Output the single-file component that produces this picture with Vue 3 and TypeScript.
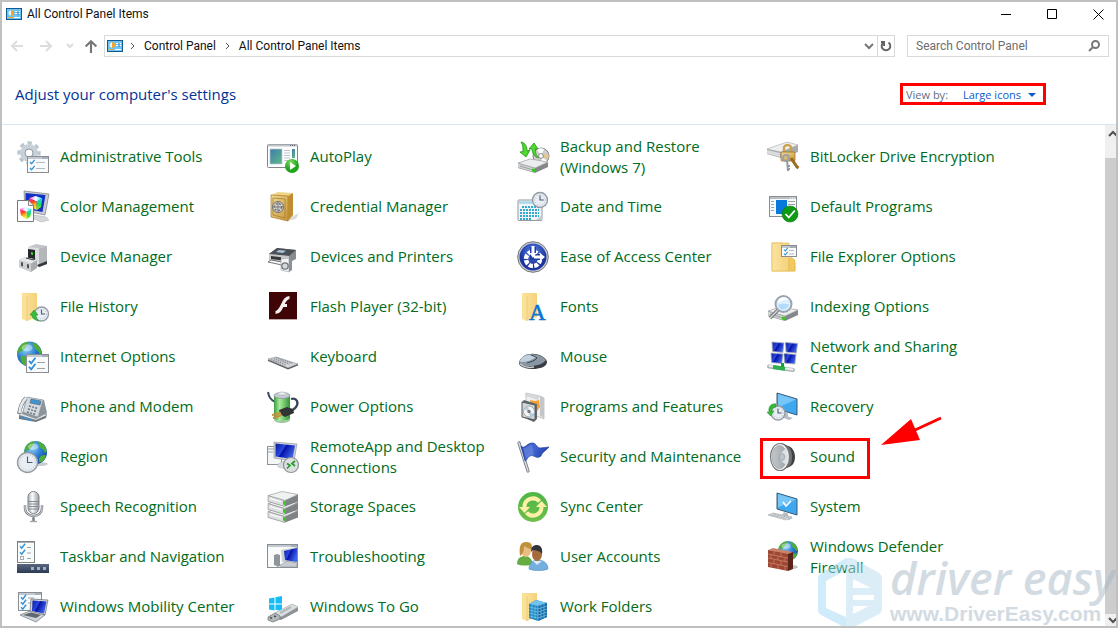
<script setup lang="ts">
import { ref } from 'vue'

interface PanelItem {
  icon: string
  label: string
  marked?: boolean
}

const view = ref('Large icons')
const query = ref('')

const items: PanelItem[] = [
  { icon: 'admin', label: 'Administrative Tools' },
  { icon: 'autoplay', label: 'AutoPlay' },
  { icon: 'backup', label: 'Backup and Restore (Windows 7)' },
  { icon: 'bitlocker', label: 'BitLocker Drive Encryption' },
  { icon: 'color', label: 'Color Management' },
  { icon: 'credential', label: 'Credential Manager' },
  { icon: 'date', label: 'Date and Time' },
  { icon: 'defaults', label: 'Default Programs' },
  { icon: 'device', label: 'Device Manager' },
  { icon: 'printers', label: 'Devices and Printers' },
  { icon: 'ease', label: 'Ease of Access Center' },
  { icon: 'explorer', label: 'File Explorer Options' },
  { icon: 'history', label: 'File History' },
  { icon: 'flash', label: 'Flash Player (32-bit)' },
  { icon: 'fonts', label: 'Fonts' },
  { icon: 'indexing', label: 'Indexing Options' },
  { icon: 'internet', label: 'Internet Options' },
  { icon: 'keyboard', label: 'Keyboard' },
  { icon: 'mouse', label: 'Mouse' },
  { icon: 'network', label: 'Network and Sharing Center' },
  { icon: 'phone', label: 'Phone and Modem' },
  { icon: 'power', label: 'Power Options' },
  { icon: 'programs', label: 'Programs and Features' },
  { icon: 'recovery', label: 'Recovery' },
  { icon: 'region', label: 'Region' },
  { icon: 'remote', label: 'RemoteApp and Desktop Connections' },
  { icon: 'security', label: 'Security and Maintenance' },
  { icon: 'sound', label: 'Sound', marked: true },
  { icon: 'speech', label: 'Speech Recognition' },
  { icon: 'storage', label: 'Storage Spaces' },
  { icon: 'sync', label: 'Sync Center' },
  { icon: 'system', label: 'System' },
  { icon: 'taskbar', label: 'Taskbar and Navigation' },
  { icon: 'trouble', label: 'Troubleshooting' },
  { icon: 'users', label: 'User Accounts' },
  { icon: 'firewall', label: 'Windows Defender Firewall' },
  { icon: 'mobility', label: 'Windows Mobility Center' },
  { icon: 'togo', label: 'Windows To Go' },
  { icon: 'work', label: 'Work Folders' },
]

const tick = (x: number, y: number, s = 1) =>
  `<path d="M${x} ${y + 2 * s}l${1.6 * s} ${1.8 * s}l${3 * s} ${-4 * s}" fill="none" stroke="#2f8fd8" stroke-width="${1.3 * s}"/>`
const clock = (x: number, y: number, r: number) =>
  `<circle cx="${x}" cy="${y}" r="${r}" fill="#e9eef4" stroke="#949ca4" stroke-width="1.4"/>` +
  `<circle cx="${x}" cy="${y}" r="${r - 2.2}" fill="none" stroke="#a9b3bd" stroke-width=".9" stroke-dasharray="1 1.6"/>` +
  `<path d="M${x} ${y - r * 0.6}V${y}H${x + r * 0.5}" fill="none" stroke="#4d5b70" stroke-width="1.1"/>`
const folder =
  '<path d="M5 2h15v24l-10 4-5-2z" fill="url(#gFold)"/><path d="M5 2l5 3v25l-5-3z" fill="#fbe09a"/><path d="M10 5v25" stroke="#e8c55f" stroke-width=".6"/>'
const globe = (x: number, y: number, r: number) =>
  `<g transform="translate(${x} ${y}) scale(${r / 10})"><circle r="10" fill="url(#gGlobe)"/>` +
  '<path d="M-9-4C-7-8-4-9.600-1-9.500c1 1 0 2-1 2.500s0 2-2 3-1 2-3 2-2 2-2.500 3C-10 0-9.700-2-9-4zM3-9.300C7-8 9.500-4 9.800-1 9 1 8 0 7-2S4-3 4-5 1-8 3-9.300zM-7 2c2-1 5 0 6 2s-1 3-1 5.500C-5 9-8 6-7 2zM5 3c2-1 4-1 4 0S7 8 4.500 8.500 3 4 5 3z" fill="#4fae35"/>' +
  '<ellipse cx="-2" cy="-5" rx="4.500" ry="2.800" fill="#fff" opacity=".4"/></g>'
const frame = (x: number, y: number, w: number, h: number) =>
  `<rect x="${x}" y="${y}" width="${w}" height="${h}" fill="#f9fafb" stroke="#898e95"/>` +
  `<path d="M${x + 0.5} ${y + 1.5}h${w - 1}" stroke="#c3c9d1" stroke-width="2"/>` +
  `<path d="M${x + w - 6} ${y + 1.5}h5" stroke="#5b6470" stroke-width="1" stroke-dasharray="1 1"/>`
const drive = (y: number) =>
  `<path d="M1 ${y + 4}L13 ${y}l18 3v5l-13 6L1 ${y + 9}z" fill="#85888b"/><path d="M1 ${y + 4}L13 ${y}l18 3-13 6z" fill="#eceded" stroke="#a3a5a7" stroke-width=".6"/>` +
  `<path d="M1 ${y + 4.500}l17 5v4L1 ${y + 8.500}z" fill="#d0d2d3"/><path d="M3 ${y + 7}l13 4" stroke="#8f9295" stroke-width=".8"/><path d="M15 ${y + 9.500}l3 .5v3.200l-3-.8z" fill="#37c51f"/>`
const slab = (y: number) =>
  `<path d="M1 ${y + 4}v6l17 5 13-5V${y + 3}z" fill="#7f8385"/><path d="M1 ${y + 4}l17 5v6l-17-5z" fill="#dcdee0" stroke="#8d9193" stroke-width=".6"/>` +
  `<path d="M1 ${y + 4}L15 ${y}l16 3-13 6z" fill="#f0f1f1" stroke="#9a9d9f" stroke-width=".7"/><path d="M3 ${y + 7}l11 3.300" stroke="#fff" stroke-width="1.200"/><path d="M16 ${y + 9.500}l3 .5v4l-3-1z" fill="#3cc91f"/>`
const cube = (x: number, y: number, s: number) =>
  `<g transform="translate(${x} ${y}) scale(${s})"><path d="M0 2L6 0l6 2-5 3z" fill="url(#gTop)"/><path d="M0 2l7 3v8L1 9z" fill="url(#gRain)"/><path d="M12 2L7 5v8l4-3z" fill="url(#gCool)"/></g>`
const screen = (x: number, y: number) =>
  `<path d="M${x} ${y}l12 1-1.200 9.500-10.300-1z" fill="url(#gScr)" stroke="#a4abb2" stroke-width=".8"/>`
const sky =
  '<path d="M10 2l20 6v16l-20-6z" fill="#3fa7ee" stroke="#3b5a75"/><path d="M11 3l18 5.500-18 8z" fill="#76c6f8"/><path d="M17 21l4 1.500v3l5 1.500-4 2-8-3z" fill="#b8bec4"/>'

const art: Record<string, string> = {
  admin:
    '<circle cx="12" cy="12" r="10" fill="none" stroke="#bcc6cd" stroke-width="3.500" stroke-dasharray="4.200 3.654" transform="rotate(-10 12 12)"/><circle cx="12" cy="12" r="6.500" fill="none" stroke="#c8d1d7" stroke-width="5"/><circle cx="12" cy="12" r="4" fill="none" stroke="#8f9aa2"/>' +
    frame(10.5, 15.5, 21, 16) + tick(13, 19) + tick(13, 25) +
    '<path d="M19 21.500h9M19 27.500h9" stroke="#b5b9be"/>',
  autoplay:
    '<rect x=".5" y="3.500" width="30" height="23" rx="1" fill="#fff" stroke="#81878d"/><path d="M1 4.500h29" stroke="#bfc5cb" stroke-width="2"/><path d="M23 4.500h6" stroke="#596270" stroke-dasharray="1 1"/><rect x="3" y="8" width="12" height="15" fill="url(#gSea)" stroke="#b8c8d0" stroke-width=".7"/><path d="M17 9.500h6M17 12h6M17 14.500h6M17 17h6M17 19.500h4" stroke="#bfc5ca"/><rect x="25" y="8" width="3" height="9" fill="url(#gSea)"/><circle cx="25" cy="25" r="7" fill="url(#gGreen)"/><path d="M23 21l6 4-6 4z" fill="#fff"/>',
  backup:
    '<circle cx="24" cy="15" r="8" fill="#cfcbc8" stroke="#858585"/><path d="M24 15l-4-6.500a8 8 0 0 1 7-.6zM24 15l6 5a8 8 0 0 1-5 2.800z" fill="#fff"/><path d="M24 15l7.500-2a8 8 0 0 1-.5 5z" fill="#e8c48a"/><circle cx="24" cy="15" r="2.400" fill="#fff" stroke="#888"/>' +
    drive(18) +
    '<path d="M4 1c5 1 6 5 6 9l3-1-4 7-6-5 3-.5C6 7 6 4 4 1z" fill="#4fd92c" stroke="#22911b" stroke-width=".8"/><path d="M12 8l5-6 4 6-2.500-.3c0 4 0 6 3 9-5-1-6-5-6.500-8.800z" fill="#4fd92c" stroke="#22911b" stroke-width=".8"/>',
  bitlocker:
    '<path d="M0 8L20 1l11 3v7L14 17 0 13z" fill="#a7a9ab"/><path d="M0 8L20 1l11 3-17 7z" fill="#efefef" stroke="#aaa" stroke-width=".5"/><path d="M0 9l13 3v4L0 12.500z" fill="#dadbdc"/><path d="M17 13V6a4 4 0 0 1 7 0v7" fill="none" stroke="#c9a24a" stroke-width="2.400"/><rect x="14" y="11" width="14" height="9" rx="1" fill="url(#gGold)" stroke="#94691d" stroke-width=".7"/><circle cx="19" cy="17" r="3" fill="none" stroke="#9da0a3" stroke-width="2"/><path d="M20 19l1 11M21 25h2M21 28h2" stroke="#96999c" stroke-width="2"/><path d="M24 17l6 9 1.500 1" stroke="#9c6c1c" stroke-width="3" fill="none"/>',
  color:
    '<path d="M7 0l25 3-4 21-20-4z" fill="#c8ccd0" stroke="#777d85" stroke-width=".7"/><path d="M8.500 2l20 2-3 17-17-3z" fill="#1530c4"/><path d="M17 24l12 2 3 3-8 2-9-4z" fill="#d5d8db" stroke="#a9adb1" stroke-width=".5"/>' +
    cube(12, 5, 1.1) +
    '<path d="M.5 9.500h11l5 5v16H.5z" fill="#fff" stroke="#777"/><path d="M11.500 9.500v5h5" fill="#e8e8e8" stroke="#888"/>' +
    cube(3, 16, 0.95),
  credential:
    '<path d="M24 26l8-4-3 6-9 2z" fill="#ddd"/><path d="M4 4l7-3 15 1-4 4z" fill="#f0d48a"/><path d="M4 4l17 1v25L4 26z" fill="url(#gGold)" stroke="#a9791f" stroke-width=".7"/><path d="M21 5l5-3v22l-5 6z" fill="#c08d30"/><path d="M6 7l12 1v19L6 24z" fill="none" stroke="#9c752e" stroke-width=".7"/><circle cx="11" cy="16" r="5.500" fill="#d2d2cf" stroke="#6f706d"/><circle cx="11" cy="16" r="3.500" fill="none" stroke="#666" stroke-width="1.200" stroke-dasharray="2 1.400"/><path d="M11 11v10M6 16h10" stroke="#7a7a78"/>',
  date:
    '<rect x="1" y="9" width="24" height="20.500" rx="1" fill="#f3f5f6" stroke="#939aa1"/><path d="M2 11.500h22" stroke="#a7d7ee" stroke-width="2.500"/><path d="M5 16h17M3 19h19M3 22h19M3 25h19M3 28h12" stroke="#31a9d0" stroke-width="2" stroke-dasharray="2 1"/><path d="M19 29l6-5v5z" fill="#c5cbd0"/>' + clock(23, 9, 7.500),
  defaults:
    '<rect x="2.500" y="5.500" width="27" height="20" fill="#f8f9fa" stroke="#898e94"/><path d="M3 7h26" stroke="#b9bec4" stroke-width="2"/><path d="M23 7h6" stroke="#fff" stroke-dasharray="1 1"/><rect x="9" y="9" width="11" height="14" fill="#0878dc"/><path d="M4 10.500h3M4 13.500h3M4 16.500h3M4 19.500h3M21 10.500h7M21 13.500h7M21 16.500h7" stroke="#9ca3aa"/><circle cx="23" cy="23" r="8" fill="#0f9a15" stroke="#067a0c" stroke-width=".6"/><path d="M18.500 23l3.300 3.500 6-7" fill="none" stroke="#fff" stroke-width="1.800"/>',
  device:
    '<path d="M11 6l8-3 11 2v18l-8 3-11-3z" fill="#c3c5c8"/><path d="M19 9l11-4v18l-8 3-3-2z" fill="#b4b7ba"/><path d="M11 6l11 1v18l-11-3z" fill="#dcdee0"/><path d="M11 8l7 1v9l-7-1z" fill="#25292b"/><path d="M14 11l2 .4v2.500l-2-.4z" fill="#42d82a"/><path d="M20 24l10-4v3l-8 3z" fill="#35383a"/><path d="M2 19l6-3 12 3v8l-6 4-12-5z" fill="#a9abae"/><path d="M2 19l12 3.500V31L2 26z" fill="#cfd1d3"/><path d="M2 19l6-3 12 3-6 3.500z" fill="#e7e8ea"/><path d="M4 21l2 .6v4l-2-.6zM10 23l2 .5v4l-2-.6z" fill="#4e5256"/><path d="M9 17l8 2 1-2" stroke="#303335" stroke-width="1" fill="none"/>',
  printers:
    '<path d="M2 13L10 7l19 2v9l-8 4-19-3z" fill="#888d91"/><path d="M2 13L10 7l19 2-7 6z" fill="#4c5054"/><path d="M9 11l3-2 7 .8-3 2.200z" fill="#a9c5df"/><path d="M2 13l20 2v7L2 19z" fill="#c5c8ca"/><path d="M4 15l10 1.300v3L4 18z" fill="#33373a"/><path d="M1 21l3-2 11 2v3z" fill="#fafafa" stroke="#555" stroke-width=".8"/><path d="M14 18l8-1v14l-8-2z" fill="#f3f4f5" stroke="#9da1a4" stroke-width=".6"/><path d="M22 17l3 1v11l-3 2z" fill="#8d9194"/><circle cx="18" cy="25" r="3.200" fill="#d2d9de" stroke="#6f767b" stroke-width="1.300"/>',
  ease:
    '<circle cx="16" cy="16" r="15.300" fill="#c9ccd2" stroke="#6f757e" stroke-width="1"/><circle cx="16" cy="16" r="13.500" fill="url(#gEase)"/><circle cx="16" cy="18" r="7" fill="none" stroke="#fff" stroke-width="4.500" stroke-dasharray="4.200 1.300"/><path d="M16 6v10h10" fill="none" stroke="#1e3da8" stroke-width="6"/><path d="M14.500 5h3v7h2l-3.500 5-3.500-5h2zM17 14.500h6v-2.500l5 4-5 4v-2.500h-6z" fill="#fff"/>',
  explorer:
    '<path d="M5 2h11v20h12v8H5z" fill="#fbdf90" stroke="#e0b94d" stroke-width=".8"/><path d="M5 2h17v28H5z" fill="url(#gFold)" stroke="#e3bf5d" stroke-width=".7"/><path d="M22 18l2-2 4 3v11h-6z" fill="#f2c95f" stroke="#deb34a" stroke-width=".5"/>' +
    frame(14.5, 4.5, 15, 11) + tick(17, 7, 0.8) + tick(17, 11, 0.8) + '<path d="M22 9.500h5M22 13h5" stroke="#b4bac0"/>',
  history:
    folder + clock(24.5, 23, 7) +
    '<path d="M13 24l4-5 4 5h-2c0 3 1 4 3 6-5-1-7-3-7-6z" fill="#39ba3b" stroke="#168b25" stroke-width=".5"/>',
  flash:
    '<rect x="2" y="1" width="28" height="27" fill="#3f0406"/><path d="M2 28.500h28" stroke="#bba9a9"/><path d="M22.500 6.500c-7 0-7 15-14 15" fill="none" stroke="#f4efef" stroke-width="3.200"/><path d="M14 14.500h6" stroke="#f4efef" stroke-width="3"/>',
  fonts: folder + '<text x="12" y="29" font-family="Liberation Serif, serif" font-size="23" font-weight="400" stroke="#0874d4" stroke-width=".6" fill="#0874d4">A</text>',
  indexing:
    drive(16) +
    '<path d="M13 17L3 27" stroke="#73777b" stroke-width="3.500"/><path d="M13 17L3 27" stroke="#d4d6d7" stroke-width="1.500"/><circle cx="16.500" cy="13" r="8" fill="#dcefff" stroke="#9ba4ae" stroke-width="2"/><path d="M11 12a6 6 0 0 1 11-3c-4-1-7 0-11 3z" fill="#fff"/><path d="M11 14c4-2 7-1 11-1-1 6-9 8-11 1z" fill="#b4dafa"/>',
  internet:
    globe(12.500, 13, 12.500) + frame(9.5, 13.500, 22, 18) + tick(12, 17, 1.400) + tick(12, 23, 1.400) +
    '<path d="M20 21.500h8M20 27.500h8" stroke="#9ba2a9"/>',
  keyboard:
    '<path d="M1 18l8-2 22 7-10 4z" fill="#d5d7d9" stroke="#8c8f93" stroke-width=".6"/><path d="M4 18.500l15 5.500M6.500 17.500l16 5.500M9 16.700l16.500 5.500" stroke="#8f9499" stroke-width="1.300" stroke-dasharray="1.600 .7"/><path d="M1 18.500l20 8.500 10-4v1.500L21 28.500 1 20z" fill="#5f6266"/>',
  mouse:
    '<path d="M2 22c0-3 5-9 12-9 7-1 16 4 16 8 0 5-8 7-14 7S2 26 2 22z" fill="#3a3e42"/><path d="M2 21c3-6 7-8.500 12-8 8 0 14 4 15 6-3 4-8 5-13 6S2 24 2 21z" fill="#8997a4"/><path d="M3 20c1-3 5-6 9-6 3 0 5 1 7 2-4 3-9 5-15 5z" fill="#c3cfda"/><path d="M14 14c3 1 5 2 6 3-2 3-7 4-10 5" fill="none" stroke="#3d464f" stroke-width="1"/><path d="M3 23c4 3 9 4 14 3" fill="none" stroke="#c6cacd" stroke-width="1.500"/>',
  network:
    screen(5, 1) + screen(18.5, 1.500) + screen(4, 12) + screen(17, 12.500) +
    '<path d="M2 25.500l24 3.500" stroke="#aeb3b6" stroke-width="4" stroke-linecap="round"/><path d="M2.500 25l23 3.500" stroke="#eceff0" stroke-width="2" stroke-linecap="round"/><path d="M6 26l12 1.700" stroke="#29b04b" stroke-width="4"/><path d="M15.500 26v-4" stroke="#1c9d3d" stroke-width="3"/>',
  phone:
    '<path d="M2 24l9-7 19 6-1 4-10 4L2 28z" fill="#73787e"/><path d="M2 24l9-6 19 6-11 5z" fill="#e1e4e6"/><path d="M10 6l17 3 3 13-11 6-14-5z" fill="#8d959c"/><path d="M10 6l16 3-5 17-15-5z" fill="#d3d9de" stroke="#8b9299" stroke-width=".6"/><path d="M14 8l10 2-1 4-10-2z" fill="#3f94d4" stroke="#58616a" stroke-width=".6"/><path d="M12 15l9 2.500M11 18l9 2.500M10 21l9 2.500" stroke="#6c757d" stroke-width="1.500" stroke-dasharray="2 1.200"/><path d="M9 7C5 11 3 17 2 23" fill="none" stroke="#7a828a" stroke-width="4"/><path d="M9 7C5 11 3 17 2.500 22" fill="none" stroke="#e7eaed" stroke-width="2.600"/><path d="M4 26l11 3.500" stroke="#3896dc" stroke-width="1.800" stroke-dasharray="2 1"/>',
  power:
    '<path d="M1 1c1 5 2 7 7 10" fill="none" stroke="#3b4b62" stroke-width="2"/><path d="M7 5c0-4 16-4 16 0v22c0 4-16 4-16 0z" fill="url(#gBatt)"/><ellipse cx="15" cy="4.500" rx="8" ry="3" fill="#c4cbd0" stroke="#8c9499" stroke-width=".8"/><ellipse cx="15" cy="2.500" rx="4" ry="1.600" fill="#eef1f3" stroke="#9aa0a5" stroke-width=".5"/><path d="M7 27c1 4 15 4 16 0v2c-1 4-15 4-16 0z" fill="#9ec8a0"/><path d="M24 8c6-2 8 4 5 8-2 3-5 4-8 5" fill="none" stroke="#394557" stroke-width="2.300"/><path d="M12 19l8-3 6 2 1 4-9 4-5-3z" fill="#303437"/><path d="M5 24l9-2M6 27l9-3" stroke="#c9903a" stroke-width="2"/>',
  programs:
    '<path d="M9 2l14 3 4 2v21l-5-2-13-3z" fill="#eef0f1" stroke="#aeb2b5" stroke-width=".7"/><path d="M23 5l4 2v20l-4-2z" fill="#c4c7ca"/><path d="M8 2l15 3-2 4-13-4z" fill="#d5d8da"/><path d="M13 9l5 1 4-1 1 7-3 4-5-2z" fill="#f7a12e"/><path d="M5 11l2-2 13 4v15l-3 3-12-5z" fill="#64696d"/><path d="M5 11l13 3v15L5 26z" fill="#d3d7da" stroke="#53585c" stroke-width="1"/><circle cx="12" cy="20.500" r="5.500" fill="#f4f5f6" stroke="#9ba3aa"/><path d="M12 20.500l-5-2.500a5 5 0 0 1 4-3zM12 20.500l5 3a5 5 0 0 1-4 3z" fill="#b4cbdc"/><circle cx="12" cy="20.500" r="1.700" fill="#747b81"/>',
  recovery:
    sky + clock(11, 22, 7) + '<path d="M2 21C1 15 5 12 9 13v3c-3 0-4 1-4.500 4H7l-3.500 5L0 21z" fill="#37b93c" stroke="#188c25" stroke-width=".5"/>',
  region: '<ellipse cx="22" cy="23" rx="9" ry="2" fill="#c9cdd0"/>' + globe(18.5, 11.5, 11.5) + clock(10.500, 21.500, 10),
  remote:
    '<rect x=".5" y="5.500" width="14" height="18" fill="#f4f6f7" stroke="#8d949b"/><path d="M1 8h13M1 11h5" stroke="#9ba3ab"/><path d="M7 1l23 2-3 17-20-3z" fill="#cfd3d7" stroke="#858b92" stroke-width=".6"/><path d="M8.500 2.500l19.500 2L25.500 18 8.500 15.500z" fill="url(#gScr)"/><path d="M11 23l6-3 5 1v8l-11-3z" fill="#d7dadd" stroke="#b5b9bd" stroke-width=".5"/><circle cx="24" cy="24" r="7.500" fill="#dcdfdf" stroke="#8d9496" stroke-width="1.200"/><path d="M20 22.500l3 2-3 3M28 20l-3 2.500 3 2.500" fill="none" stroke="#279a32" stroke-width="1.700"/>',
  security:
    '<path d="M2 2l9 28" stroke="#777d84" stroke-width="3.200" stroke-linecap="round"/><path d="M2 2l9 28" stroke="#d4d8dc" stroke-width="1.500" stroke-linecap="round"/><path d="M4 5c4 4 6-4 12-3 3 0 4 5 7 5s6-1 9-1c-3 4-7 5-8 9-5 4-7-2-11 0-3 1-3 5-5 5z" fill="url(#gFlag)" stroke="#1c3a95" stroke-width=".6"/><path d="M6 7c3 1 6-4 9-3l2 10c-3-1-5 2-8 3z" fill="#718ce0" opacity=".6"/>',
  sound:
    '<path d="M15 2l6 3c4 1 7 5 7 11s-3 9-6 10l-7 3z" fill="#3f4143"/><path d="M20 5c4 2 5 6 5 11s-1 8-4 10z" fill="#707376"/><ellipse cx="13" cy="16" rx="9.500" ry="13.500" fill="#f3f4f5" stroke="#74787b" stroke-width="1.200"/><ellipse cx="12.500" cy="16" rx="7.500" ry="11.500" fill="url(#gCone)" stroke="#a1a5a8" stroke-width=".8"/><path d="M13 13l6-6c2 5 2 13 0 17l-6-5z" fill="#dde1e4"/><ellipse cx="15" cy="16" rx="2.700" ry="3.600" fill="#bcc5cb" stroke="#929ca3" stroke-width=".7"/>',
  speech:
    '<path d="M8 14v3c0 5 4 8 8.500 8s8.500-3 8.500-8v-3M16.500 25v6" fill="none" stroke="#777d84" stroke-width="2.400"/><path d="M8 14v3c0 5 4 8 8.500 8s8.500-3 8.500-8v-3" fill="none" stroke="#e6e8ea" stroke-width=".9"/><path d="M13 30.500h7" stroke="#a3a8ac" stroke-width="1.400"/><rect x="11" y=".5" width="11" height="22" rx="5.500" fill="url(#gMetal)" stroke="#7e8489"/><path d="M11 10.500h11M12 13h9M12 15.500h9M12 18h9" stroke="#7b8086" stroke-width=".9"/>',
  storage: [16.5, 8.5, 0.5].map(slab).join(''),
  sync:
    '<circle cx="16" cy="16" r="15" fill="url(#gSync)"/><path d="M7.500 16a8.500 8.500 0 0 1 15-5.500" fill="none" stroke="#fff0a8" stroke-width="4"/><path d="M24.500 16a8.500 8.500 0 0 1-15 5.500" fill="none" stroke="#fff0a8" stroke-width="4"/><path d="M2 16h11l-5.500 6zM19 16h11l-5.500-6z" fill="#fff0a8"/>',
  system:
    sky + '<path d="M16 11l3 4 5-5" fill="none" stroke="#fff" stroke-width="1.600"/><path d="M1 24l5-2 19 4-6 3z" fill="#dbdee0" stroke="#a5aaaf" stroke-width=".6"/><path d="M3 24l16 3.500M6 23l16 3.500" stroke="#a0a6ab" stroke-dasharray="1.500 .7"/>',
  taskbar:
    '<rect x=".5" y=".5" width="17" height="21" fill="#fafbfb" stroke="#7d8287"/><path d="M1 1.500h16" stroke="#aab0b5"/>' + tick(3, 3, 1.100) + tick(3, 9, 1.100) +
    '<rect x="3.500" y="15.500" width="3" height="3" fill="none" stroke="#a5abb0"/><path d="M10 6.500h4M10 12h4M10 17.500h4" stroke="#a1a7ac"/><rect y="23" width="32" height="9" fill="url(#gTask)"/><path d="M14 27.500h17" stroke="#9fb0c8" stroke-width="3" stroke-dasharray="3 3"/>',
  trouble:
    frame(0.500, 3.500, 30, 23) +
    '<path d="M7 14l3-1v12l-3-1zM10 13l3 1v11l-3 1z" fill="#8f959b"/><path d="M14 9l16-3-1 17-14-2z" fill="#c8cdd1"/><path d="M17 10l13-3v14l-12-2z" fill="url(#gScr)"/><path d="M13 24l8-4 9 2v4H14z" fill="#c8cdd1" stroke="#858c92" stroke-width=".5"/>',
  users:
    '<path d="M0 23c0-6 4-8 8-8s7 3 8 8c-4 2-12 2-16 0z" fill="#65ad43"/><ellipse cx="9" cy="9" rx="5" ry="7" fill="#e9bd83"/><path d="M3 15C2 6 3 1 9 1s6 3 6 7c-4 0-5-2-8-3 0 5-1 8-4 10z" fill="#bf913c"/><path d="M12 28c0-6 4-9 9-9s10 3 10 9c-4 2-15 2-19 0z" fill="#75afdd" stroke="#4f8cbd" stroke-width=".6"/><path d="M16 20l4 4 5-4z" fill="#dbeaf5"/><ellipse cx="20" cy="13" rx="5" ry="7" fill="#a56b3c"/><path d="M14 11c0-5 2-7 6-7s6 4 5 9c-2-3-6-4-9-4z" fill="#31343a"/>',
  firewall:
    '<ellipse cx="24" cy="26" rx="7" ry="2" fill="#c2c5c8"/>' + globe(21, 10, 10) +
    '<path d="M1 9l5-2 20 4-4 3z" fill="#c98369"/><path d="M1 9l20 4v17L1 26z" fill="#9d4633"/><path d="M21 13l5-2v17l-5 2z" fill="#5b241a"/><path d="M1 13l20 4M1 17l20 4M1 21.500l20 4M7 10v4M14 12v4M4 14v4M11 15v4M18 17v4M7 19v4M14 20v4M4 22v5M11 24v4M18 25v4" stroke="#ca8069" stroke-width=".8"/>',
  mobility:
    frame(1.5, 1.5, 23, 18) + tick(4, 4, 1.100) + tick(4, 9, 1.100) + tick(4, 14, 1.100) +
    '<path d="M11 7h6M11 12h4" stroke="#9ca3a9"/><path d="M14 8l17 1-3 15-15-3z" fill="#d0d4d8" stroke="#646b73" stroke-width=".7"/><path d="M15.500 9.500l14 1-2.500 12-12-2.500z" fill="url(#gScr)"/><path d="M3 24l10-4 15 4-9 7z" fill="#cfd4d9" stroke="#6f767d" stroke-width=".7"/><path d="M6 24l8-2.500 10 2.500-5 3z" fill="#60676e"/>',
  togo:
    '<path d="M2 7.500l5.500-1v6H2zM8.500 6.300L15 5v7.500H8.500zM2 13.500h5.500v6L2 18.500zM8.500 13.500H15V20l-6.500-1.200z" fill="#16bdf5"/><path d="M8 22L25 13l6 3v4L14 29l-6-3z" fill="#8b9195"/><path d="M8 22L25 13l6 3-17 10z" fill="#dcdfe1" stroke="#a6abaf" stroke-width=".5"/><path d="M13 22l11-6" stroke="#b2b7ba" stroke-width="2"/><path d="M1 26l7-4 5 3v3l-7 3-5-2z" fill="#b3b8bb" stroke="#676c70" stroke-width=".7"/><path d="M3 26.500l2 .7M7 25l2 .7" stroke="#4b5053" stroke-width="1.500"/>',
  work:
    folder + '<path d="M12 13l7-4 11 3v14l-9 4-9-3z" fill="#1d86c6"/><path d="M12 13l7-4 11 3-9 3z" fill="#71c3eb"/><path d="M21 15l9-3v14l-9 4z" fill="#1469a5"/><path d="M12 16l9 2 9-3M12 19l9 2 9-3M12 22l9 2 9-3M12 25l9 2 9-3M15 14v13M18 15v13M21 15v15M24 14v14M27 13v14" stroke="#8cd0ee" stroke-width=".6" fill="none"/>',
}
</script>

<template>
  <div class="window">
    <svg class="defs" aria-hidden="true">
      <defs>
        <linearGradient id="gFold" x2="1" y2="0"><stop stop-color="#fbe39f" /><stop offset="1" stop-color="#f4d27a" /></linearGradient>
        <radialGradient id="gGlobe" cx=".35" cy=".3" r=".8"><stop stop-color="#8fd3fa" /><stop offset=".5" stop-color="#2a7fd4" /><stop offset="1" stop-color="#123f98" /></radialGradient>
        <linearGradient id="gScr" x2="1" y2=".5"><stop stop-color="#0a1c9c" /><stop offset=".45" stop-color="#2a48e0" /><stop offset=".5" stop-color="#0510a8" /><stop offset="1" stop-color="#3c62e8" /></linearGradient>
        <linearGradient id="gSea" x2=".8" y2="1"><stop stop-color="#3d7dab" /><stop offset="1" stop-color="#5db38c" /></linearGradient>
        <radialGradient id="gGreen" cx=".4" cy=".25"><stop stop-color="#7be05c" /><stop offset="1" stop-color="#1fa51c" /></radialGradient>
        <linearGradient id="gGold" x2="1" y2="1"><stop stop-color="#f3dc95" /><stop offset="1" stop-color="#c8963a" /></linearGradient>
        <linearGradient id="gRain" x2=".3" y2="1"><stop stop-color="#ff2fd0" /><stop offset=".4" stop-color="#ff3b1c" /><stop offset=".7" stop-color="#ffb41c" /><stop offset="1" stop-color="#fff01c" /></linearGradient>
        <linearGradient id="gTop" x2="1" y2="0"><stop stop-color="#ff4fe0" /><stop offset=".5" stop-color="#fff" /><stop offset="1" stop-color="#2fe6ff" /></linearGradient>
        <linearGradient id="gCool" x2="0" y2="1"><stop stop-color="#1fd8ff" /><stop offset=".5" stop-color="#22d95c" /><stop offset="1" stop-color="#9bea1c" /></linearGradient>
        <radialGradient id="gEase" cx=".5" cy=".3"><stop stop-color="#5c83e6" /><stop offset="1" stop-color="#1a35a0" /></radialGradient>
        <linearGradient id="gBatt" x2="1" y2="0"><stop stop-color="#3c9b40" /><stop offset=".35" stop-color="#a8ec9a" /><stop offset="1" stop-color="#2e9637" /></linearGradient>
        <linearGradient id="gFlag" x2="1" y2=".3"><stop stop-color="#2747b5" /><stop offset=".5" stop-color="#4467d4" /><stop offset="1" stop-color="#2343ad" /></linearGradient>
        <linearGradient id="gCone" x2="1" y2="0"><stop stop-color="#c2c7ca" /><stop offset="1" stop-color="#9ea5aa" /></linearGradient>
        <linearGradient id="gMetal" x2="1" y2="0"><stop stop-color="#a9afb4" /><stop offset=".4" stop-color="#fbfcfc" /><stop offset="1" stop-color="#969ca2" /></linearGradient>
        <linearGradient id="gSync" x2="0" y2="1"><stop stop-color="#4fb648" /><stop offset="1" stop-color="#6cc04a" /></linearGradient>
        <linearGradient id="gTask" x2="0" y2="1"><stop stop-color="#59677e" /><stop offset="1" stop-color="#2c3a54" /></linearGradient>
        <symbol id="panelGlyph" viewBox="0 0 16 12">
          <rect x=".5" y=".5" width="15" height="11" fill="#6cc4f4" stroke="#14598c" />
          <circle cx="5" cy="5" r="2.500" fill="#e9f7ff" />
          <path d="M5 5V2a3 3 0 0 1 0 6z" fill="#f2a42b" />
          <path d="M2 9.500h5" stroke="#f2a42b" />
          <path d="M9 3.500h5M9 5.500h5M8 9.500h6" stroke="#fff" />
          <path d="M12 3v4" stroke="#1d76b5" />
        </symbol>
      </defs>
    </svg>

    <header class="titlebar">
      <svg class="app-glyph" aria-hidden="true"><use href="#panelGlyph" /></svg>
      <h1>All Control Panel Items</h1>
      <div class="caption">
        <button type="button" aria-label="Minimize"><svg viewBox="0 0 11 11"><path d="M0 5.500h10" /></svg></button>
        <button type="button" aria-label="Maximize"><svg viewBox="0 0 11 11"><path d="M.5.5h9v9h-9z" /></svg></button>
        <button type="button" aria-label="Close"><svg viewBox="0 0 11 11"><path d="M.5.5l10 10M10.500.5l-10 10" /></svg></button>
      </div>
    </header>

    <nav class="navbar">
      <div class="history">
        <button type="button" class="back" aria-label="Back" disabled><svg viewBox="0 0 14 12"><path d="M13 6H2M7 1L2 6l5 5" /></svg></button>
        <button type="button" class="forward" aria-label="Forward" disabled><svg viewBox="0 0 14 12"><path d="M1 6h11M7 1l5 5-5 5" /></svg></button>
        <button type="button" class="recent" aria-label="Recent locations" disabled><svg viewBox="0 0 8 6"><path d="M1 1l3 3 3-3" /></svg></button>
        <button type="button" class="up" aria-label="Up"><svg viewBox="0 0 12 13"><path d="M6 13V2M1 7l5-5 5 5" /></svg></button>
      </div>
      <div class="address">
        <svg class="app-glyph" aria-hidden="true"><use href="#panelGlyph" /></svg>
        <svg class="sep" viewBox="0 0 5 8" aria-hidden="true"><path d="M1 1l3 3-3 3" /></svg>
        <a href="#control-panel">Control Panel</a>
        <svg class="sep" viewBox="0 0 5 8" aria-hidden="true"><path d="M1 1l3 3-3 3" /></svg>
        <a href="#all-items">All Control Panel Items</a>
        <button type="button" class="drop" aria-label="Previous locations"><svg viewBox="0 0 10 7"><path d="M1 1l4 4 4-4" /></svg></button>
        <button type="button" class="reload" aria-label="Refresh"><svg viewBox="0 0 12 12"><path d="M8.500 2.500A4.300 4.300 0 1 1 3.500 2.500M4 6V2H1" /></svg></button>
      </div>
      <label class="search">
        <input v-model="query" type="text" placeholder="Search Control Panel" aria-label="Search Control Panel" />
        <svg viewBox="0 0 12 12" aria-hidden="true"><circle cx="7.500" cy="4.500" r="3.500" /><path d="M5 7L1 11" /></svg>
      </label>
    </nav>

    <section class="heading">
      <h2>Adjust your computer's settings</h2>
      <div class="view-by">
        <label for="view">View by:</label>
        <select id="view" v-model="view">
          <option>Category</option>
          <option>Large icons</option>
          <option>Small icons</option>
        </select>
        <svg viewBox="0 0 8 4" aria-hidden="true"><path d="M0 0h8L4 4z" /></svg>
      </div>
    </section>

    <main class="body">
      <ul class="items">
        <li v-for="item in items" :key="item.icon" :class="{ marked: item.marked }">
          <a :href="'#' + item.icon">
            <svg class="icon" viewBox="0 0 32 32" aria-hidden="true" v-html="art[item.icon]"></svg>
            <span>{{ item.label }}</span>
          </a>
          <svg v-if="item.marked" class="pointer" viewBox="0 0 62 32" aria-hidden="true">
            <path d="M60 2L34 14" stroke="#f00" stroke-width="3" />
            <path d="M0 29L30 3l9 21z" fill="#f00" />
          </svg>
        </li>
      </ul>
      <div class="scrollbar">
        <button type="button" aria-label="Scroll up"><svg viewBox="0 0 10 7"><path d="M1 6l4-4 4 4" /></svg></button>
        <div class="thumb"></div>
        <button type="button" class="down" aria-label="Scroll down"><svg viewBox="0 0 10 7"><path d="M1 1l4 4 4-4" /></svg></button>
      </div>
    </main>

    <div class="watermark">
      <svg viewBox="0 0 64 70" aria-hidden="true">
        <path d="M34 0v12h-6L8 23v27l20 9h6v11h-6L3 57q-3-2-3-6V21q0-4 3-6L28 0z" fill="#a2d8f4" />
        <path d="M28 0h6l27 15q3 2 3 6v29q0 4-3 6L34 70h-6zM35 21v9h18zM35 37v5h21v-5zM35 48v8l16-8z" fill="#b9dcf0" fill-rule="evenodd" />
      </svg>
      <div>
        <p class="brand">driver easy</p>
        <p class="site">www.DriverEasy.com</p>
      </div>
    </div>
  </div>
</template>

<style>
body {
  margin: 0;
}
</style>

<style scoped>
*,
*::after {
  box-sizing: border-box;
}
.window {
  position: relative;
  display: flex;
  flex-direction: column;
  height: 100vh;
  overflow: hidden;
  border: 2px solid #c0c0c0;
  background: #fff;
  color: #111;
  font: 12px/16px Roboto, "Open Sans", sans-serif;
}
.defs {
  position: absolute;
  width: 0;
  height: 0;
}
button {
  display: grid;
  place-items: center;
  padding: 0;
  border: 0;
  background: none;
  color: inherit;
}
svg {
  flex: none;
}
button svg,
.sep {
  fill: none;
  stroke: currentColor;
}
a {
  color: inherit;
  text-decoration: none;
}
h1,
h2,
p,
ul {
  margin: 0;
  padding: 0;
  font: inherit;
}
.app-glyph {
  width: 16px;
  height: 12px;
}
.titlebar {
  display: flex;
  align-items: center;
  gap: 5px;
  height: 24px;
  padding-left: 4px;
}
.caption {
  display: flex;
  margin: 0 -5px 0 auto;
}
.caption button {
  width: 46px;
  height: 22px;
  color: #000;
}
.caption svg {
  width: 11px;
  height: 11px;
}
.navbar {
  display: flex;
  align-items: center;
  gap: 12px;
  height: 40px;
  padding: 0 7px 0 8px;
}
.history {
  display: flex;
  align-items: center;
  gap: 15px;
  margin-right: -6px;
  color: #777;
}
.history svg {
  width: 14px;
  height: 12px;
  stroke-width: 2;
}
.history .recent svg {
  width: 8px;
  height: 6px;
}
.history .recent {
  margin: 0 -5px 0 -2px;
}
.history .up svg {
  height: 14px;
}
.history button:disabled {
  color: #ddd;
}
.address {
  display: flex;
  flex: 1;
  align-items: center;
  height: 22px;
  padding-left: 2px;
  border: 1px solid #d9d9d9;
}
.sep {
  width: 5px;
  height: 8px;
  margin: 0 9px 0 7px;
  color: #555;
}
a + .sep {
  margin: 0 9px;
}
.drop {
  width: 16px;
  height: 20px;
  margin-left: auto;
  color: #777;
}
.drop svg,
.scrollbar svg {
  width: 10px;
  height: 7px;
  stroke-width: 2;
}
.reload {
  width: 17px;
  height: 20px;
  border-left: 1px solid #d9d9d9;
  color: #666;
}
.reload svg {
  width: 12px;
  height: 12px;
  stroke-width: 2;
}
.search {
  display: flex;
  align-items: center;
  width: 202px;
  height: 22px;
  padding: 0 8px;
  border: 1px solid #d9d9d9;
}
.search input {
  flex: 1;
  min-width: 0;
  padding: 0;
  border: 0;
  outline: 0;
  background: none;
  font: inherit;
}
.search input::placeholder {
  color: #6d6d6d;
  opacity: 1;
}
.search svg {
  width: 12px;
  height: 12px;
  fill: none;
  stroke: #777;
  stroke-width: 2;
}
.heading {
  display: flex;
  align-items: center;
  justify-content: space-between;
  flex: none;
  height: 59px;
  padding: 0 70px 2px 13px;
  border-bottom: 1px solid #d6e5f2;
  font-family: "Open Sans", "Noto Sans", sans-serif;
}
h2 {
  color: #003399;
  font-size: 15px;
  line-height: 20px;
}
.view-by {
  display: flex;
  align-items: center;
  width: 146px;
  height: 22px;
  padding: 2px 3px 0;
  border: 3px solid #f00;
  color: #5f6c85;
  font-size: 11px;
}
.view-by select {
  margin-left: auto;
  padding: 0;
  border: 0;
  outline: 0;
  background: none;
  color: #0a5bcc;
  font: inherit;
  appearance: none;
}
.view-by svg {
  width: 8px;
  height: 4px;
  margin: 0 4px 0 6px;
  fill: #0a5bcc;
}
.body {
  display: flex;
  flex: 1;
  min-height: 0;
}
.items {
  display: grid;
  flex: 1;
  grid-template-columns: repeat(auto-fill, 250px);
  grid-auto-rows: 50px;
  align-content: start;
  padding: 7px 0 0 15px;
  font-family: "Open Sans", "Noto Sans", sans-serif;
  list-style: none;
}
.items li {
  position: relative;
}
.items a {
  display: flex;
  align-items: center;
  gap: 11px;
  height: 50px;
  padding-right: 17px;
  color: #006c1c;
  font-size: 15px;
  line-height: 21px;
}
.items span {
  padding-bottom: 1px;
}
.icon {
  width: 32px;
  height: 32px;
  overflow: visible;
}
.marked::after {
  position: absolute;
  top: 6px;
  left: -7px;
  width: 110px;
  height: 41px;
  border: 3px solid #f00;
  content: "";
}
.pointer {
  position: absolute;
  top: -16px;
  left: 114px;
  width: 62px;
  height: 32px;
}
.scrollbar {
  display: flex;
  flex-direction: column;
  width: 11px;
  overflow: hidden;
  background: #f0f0f0;
  color: #505050;
}
.scrollbar button {
  width: 16px;
  height: 17px;
}
.scrollbar .thumb {
  flex: 1;
  margin-top: 16px;
  background: #cdcdcd;
}
.scrollbar .down {
  height: 12px;
}
.watermark {
  position: absolute;
  right: -2px;
  bottom: -2px;
  display: flex;
  gap: 8px;
  align-items: flex-end;
  color: #a9b9c6;
  opacity: 0.5;
  white-space: nowrap;
  pointer-events: none;
}
.watermark svg {
  width: 64px;
  height: 70px;
}
.brand {
  width: 228px;
  font: italic 600 45px/44px "Open Sans", sans-serif;
}
.site {
  font: bold 21px/28px "Liberation Sans", Arial, sans-serif;
}
</style>
